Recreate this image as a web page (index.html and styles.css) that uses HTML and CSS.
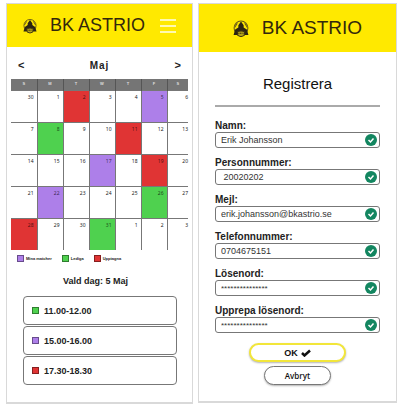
FILE: index.html
```html
<!DOCTYPE html>
<html lang="sv">
<head>
  <meta charset="UTF-8">
  <meta name="viewport" content="width=device-width, initial-scale=1.0">
  <title>BK Astrio</title>
  <link rel="stylesheet" href="styles.css">
</head>
<body>

  <!-- Shared icons -->
  <svg class="icon-defs" width="0" height="0" aria-hidden="true">
    <symbol id="logo" viewBox="0 0 30 32">
      <circle cx="15" cy="15" r="13" fill="none" stroke="#6b5c18" stroke-width="2"/>
      <path d="M15 3 L20 10 L20 14 L26 18 L29 28 L22 28 L20 21 L10 21 L8 28 L1 28 L4 18 L10 14 L10 10 Z" fill="#2b2412"/>
      <path d="M8 6 L3 14 M22 6 L27 14" stroke="#6b5c18" stroke-width="2"/>
      <path d="M8 22 Q15 19 22 22 L21 29 Q15 33 9 29 Z" fill="#b5a51a" stroke="#3a3010" stroke-width="2"/>
      <path d="M10 25 H20" stroke="#3a3010" stroke-width="2" stroke-dasharray="2 1"/>
    </symbol>
    <symbol id="valid" viewBox="0 0 24 24">
      <circle cx="12" cy="12" r="12" fill="#138660"/>
      <path d="M7 12 L11 16 L17 9" fill="none" stroke="#fff" stroke-width="3"/>
    </symbol>
  </svg>

  <!-- Booking -->
  <section class="screen">
    <header class="topbar">
      <svg class="logo"><use href="#logo"/></svg>
      <h1>BK ASTRIO</h1>
      <button class="menu-btn" aria-label="Meny"><span></span><span></span><span></span></button>
    </header>

    <div class="month-nav">
      <button aria-label="Föregående månad">&lt;</button>
      <h2>Maj</h2>
      <button aria-label="Nästa månad">&gt;</button>
    </div>

    <table class="calendar">
      <colgroup><col span="6" class="day-col"><col></colgroup>
      <thead>
        <tr><th>S</th><th>M</th><th>T</th><th>W</th><th>T</th><th>F</th><th>S</th></tr>
      </thead>
      <tbody>
        <tr><td>30</td><td>1</td><td class="booked">2</td><td>3</td><td>4</td><td class="mine">5</td><td>6</td></tr>
        <tr><td>7</td><td class="free">8</td><td>9</td><td>10</td><td class="booked">11</td><td>12</td><td>13</td></tr>
        <tr><td>14</td><td>15</td><td>16</td><td class="mine">17</td><td>18</td><td class="booked">19</td><td>20</td></tr>
        <tr><td>21</td><td class="mine">22</td><td>23</td><td>24</td><td>25</td><td class="free">26</td><td>27</td></tr>
        <tr><td class="booked">28</td><td>29</td><td>30</td><td class="free">31</td><td>1</td><td>2</td><td>3</td></tr>
      </tbody>
    </table>

    <ul class="legend">
      <li><span class="swatch mine"></span>Mina matcher</li>
      <li><span class="swatch free"></span>Lediga</li>
      <li><span class="swatch booked"></span>Upptagna</li>
    </ul>

    <h3 class="chosen-day">Vald dag: 5 Maj</h3>

    <div class="slots">
      <button class="slot"><span class="swatch free"></span>11.00-12.00</button>
      <button class="slot"><span class="swatch mine"></span>15.00-16.00</button>
      <button class="slot"><span class="swatch booked"></span>17.30-18.30</button>
    </div>
  </section>

  <!-- Registration -->
  <section class="screen">
    <header class="topbar topbar-large">
      <svg class="logo"><use href="#logo"/></svg>
      <h1>BK ASTRIO</h1>
    </header>

    <form class="register">
      <h2>Registrera</h2>

      <label for="name">Namn:</label>
      <div class="field">
        <input id="name" type="text" value="Erik Johansson">
        <svg><use href="#valid"/></svg>
      </div>
      <label for="pnr">Personnummer:</label>
      <div class="field">
        <input id="pnr" type="text" value=" 20020202">
        <svg><use href="#valid"/></svg>
      </div>
      <label for="mail">Mejl:</label>
      <div class="field">
        <input id="mail" type="text" value="erik.johansson@bkastrio.se">
        <svg><use href="#valid"/></svg>
      </div>
      <label for="phone">Telefonnummer:</label>
      <div class="field">
        <input id="phone" type="text" value="0704675151">
        <svg><use href="#valid"/></svg>
      </div>
      <label for="pass">Lösenord:</label>
      <div class="field">
        <input id="pass" class="secret" type="text" value="***************">
        <svg><use href="#valid"/></svg>
      </div>
      <label for="pass2">Upprepa lösenord:</label>
      <div class="field">
        <input id="pass2" class="secret" type="text" value="***************">
        <svg><use href="#valid"/></svg>
      </div>

      <div class="actions">
        <button type="button" class="ok-btn">OK
          <svg viewBox="0 0 20 16"><path d="M2 8 L7 13 L18 3" fill="none" stroke="#111" stroke-width="5"/></svg>
        </button>
        <button type="button" class="cancel-btn">Avbryt</button>
      </div>
    </form>
  </section>

</body>
</html>
```
FILE: styles.css
```css
* {
  box-sizing: border-box;
}
body {
  display: grid;
  grid-template-columns: 187fr 199fr;
  align-items: start;
  gap: 5px;
  margin: 0;
  padding: 3px 6px;
  background-color: #fff;
  color: #222;
  font-family: "Liberation Sans", Arial, sans-serif;
}
h1, h2, h3 {
  margin: 0;
}
button {
  font-family: inherit;
  color: inherit;
  cursor: pointer;
}
.icon-defs {
  position: absolute;
}
.screen {
  border: 1px solid #d9d9d9;
  border-bottom-width: 2px;
}

/* Yellow header */
.topbar {
  display: flex;
  align-items: center;
  gap: 13px;
  height: 43px;
  padding: 0 16px;
  background-color: #ffe900;
  color: #33280c;
}
.topbar h1 {
  font-size: 18px;
  font-weight: normal;
}
.logo {
  width: 14px;
  height: 16px;
}
.menu-btn {
  display: flex;
  flex-direction: column;
  gap: 4px;
  width: 16px;
  margin-left: auto;
  padding: 0;
  border: none;
  background: none;
}
.menu-btn span {
  height: 2px;
  background-color: #fff9b0;
}
.topbar-large {
  justify-content: center;
  height: 48px;
}
.topbar-large h1 {
  font-size: 19px;
}
.topbar-large .logo {
  width: 16px;
  height: 17px;
}

/* Month switcher */
.month-nav {
  display: flex;
  justify-content: space-between;
  align-items: center;
  height: 32px;
  padding: 4px 11px 0;
}
.month-nav h2 {
  font-size: 10px;
  letter-spacing: 1px;
}
.month-nav button {
  padding: 0;
  border: none;
  background: none;
  font-size: 11px;
  font-weight: bold;
}

/* Calendar */
.calendar {
  width: calc(100% - 8px);
  margin: 0 4px;
  table-layout: fixed;
  border-collapse: collapse;
}
.day-col {
  width: 26px;
}
.calendar th {
  height: 11px;
  padding: 0;
  border-right: 1px solid #555;
  background-color: #757575;
  color: #ddd;
  font-size: 4px;
  line-height: 4px;
}
.calendar td {
  height: 32px;
  padding: 4px 3px;
  border-top: 1px solid #777;
  border-right: 1px solid #777;
  font-family: "Noto Sans", sans-serif;
  font-size: 5px;
  line-height: 5px;
  text-align: right;
  vertical-align: top;
}
.calendar th:last-child,
.calendar td:last-child {
  padding-right: 0;
  border-right: none;
}
.booked {
  background-color: #e03434;
}
.mine {
  background-color: #ad7fe9;
}
.free {
  background-color: #4fd14f;
}
.calendar .booked,
.calendar .mine,
.calendar .free {
  color: rgba(0, 0, 0, 0.7);
}
.swatch {
  flex: none;
  width: 7px;
  height: 7px;
  border: 1px solid rgba(0, 0, 0, 0.4);
}
.legend {
  display: flex;
  gap: 10px;
  margin: 5px 0 0;
  padding: 0 10px;
  list-style: none;
  font-size: 4px;
  font-weight: bold;
}
.legend li {
  display: flex;
  align-items: center;
  gap: 2px;
}

/* Time slots */
.chosen-day {
  margin: 14px 0 9px;
  padding-right: 8px;
  font-size: 9px;
  line-height: 11px;
  text-align: center;
}
.slots {
  display: flex;
  flex-direction: column;
  gap: 1px;
  padding: 0 15px 17px 16px;
}
.slot {
  display: flex;
  align-items: center;
  gap: 5px;
  height: 29px;
  padding: 0 8px;
  border: 1px solid #777;
  border-radius: 4px;
  background-color: #fff;
  font-size: 9px;
  font-weight: bold;
}

/* Registration form */
.register {
  padding: 23px 16px 16px;
}
.register h2 {
  margin-bottom: 12px;
  padding-bottom: 12px;
  border-bottom: 2px solid #aaa;
  color: #111;
  font-size: 15px;
  font-weight: normal;
  line-height: 18px;
  text-align: center;
}
.register label {
  display: block;
  font-size: 10px;
  font-weight: bold;
  line-height: 13px;
}
.field {
  display: flex;
  align-items: center;
  height: 16px;
  margin-bottom: 8px;
  padding: 0 2px 0 5px;
  border: 1px solid #777;
  border-radius: 3px;
}
.field input {
  flex: 1;
  min-width: 0;
  padding: 0;
  border: none;
  outline: none;
  background: none;
  color: #333;
  font-family: inherit;
  font-size: 9px;
}
.field .secret {
  font-size: 8px;
}
.field svg {
  width: 12px;
  height: 12px;
}
.actions {
  display: flex;
  flex-direction: column;
  align-items: center;
  gap: 4px;
  margin-top: 10px;
}
.actions button {
  display: flex;
  justify-content: center;
  align-items: center;
  gap: 3px;
  height: 19px;
  padding: 0;
  border-radius: 10px;
  background-color: #fff;
  color: #111;
  font-size: 9px;
  font-weight: bold;
  box-shadow: 0 1px 2px rgba(0, 0, 0, 0.3);
}
.actions svg {
  width: 10px;
  height: 8px;
}
.actions .ok-btn {
  width: 97px;
  border: 2px solid #f2e63a;
}
.actions .cancel-btn {
  width: 67px;
  border: 1px solid #777;
  font-family: "Open Sans", sans-serif;
  font-size: 8px;
  font-weight: 600;
}
```
